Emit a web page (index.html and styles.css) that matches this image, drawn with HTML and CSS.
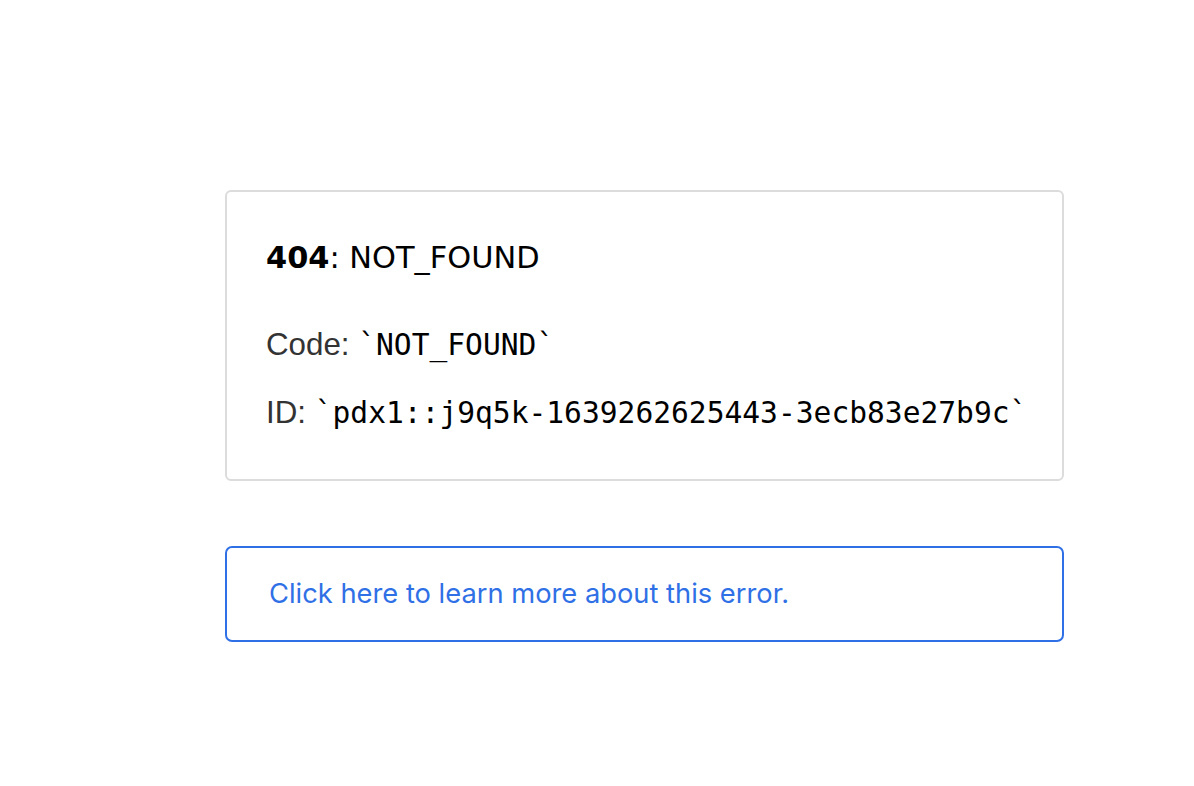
FILE: index.html
```html
<!DOCTYPE html>
<html>
<head>
<meta charset="utf-8">
<link rel="stylesheet" href="styles.css">
</head>
<body>
<main class="page">
  <section class="error-box">
    <h1 class="title"><strong>404</strong>: NOT_FOUND</h1>
    <p class="line">Code: <code class="mono">`NOT_FOUND`</code></p>
    <p class="line">ID: <code class="mono">`pdx1::j9q5k-1639262625443-3ecb83e27b9c`</code></p>
  </section>
  <a class="learn" href="#">Click here to learn more about this error.</a>
</main>
</body>
</html>
```

FILE: styles.css
```css
html, body {
  margin: 0;
  padding: 0;
  background: #fff;
}
.page {
  display: flex;
  flex-direction: column;
  gap: 65px;
  padding: 190px 0 0 225px;
  width: 839px;
}
.error-box {
  border: 2px solid #dcdcdc;
  border-radius: 6px;
  padding: 38px 20px 32px 39px;
}
.title {
  margin: 0 0 25px;
  font-family: "DejaVu Sans", sans-serif;
  font-size: 30.4px;
  font-weight: normal;
  line-height: 56px;
  color: #000;
}
.title strong {
  font-weight: bold;
}
.line {
  margin: 0;
  font-family: "Liberation Sans", sans-serif;
  font-size: 31.3px;
  line-height: 67px;
  color: #333;
  white-space: nowrap;
}
.mono {
  font-family: "DejaVu Sans Mono", monospace;
  font-size: 29.6px;
  color: #000;
}
.learn {
  display: block;
  border: 2px solid #3070e6;
  border-radius: 7px;
  padding: 25px 42px;
  font-family: "Inter", sans-serif;
  font-size: 27.3px;
  line-height: 42px;
  color: #3070e6;
  text-decoration: none;
}
```
